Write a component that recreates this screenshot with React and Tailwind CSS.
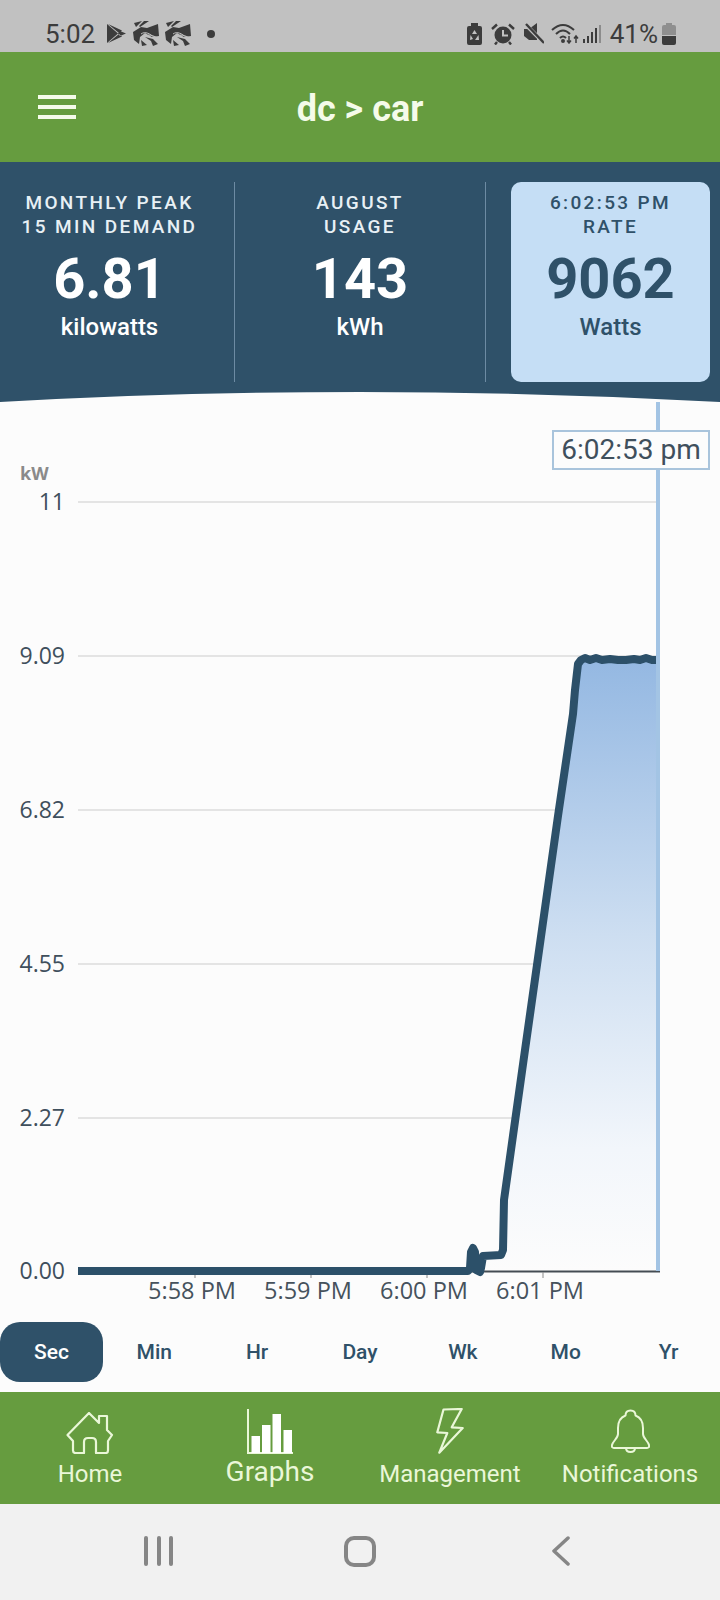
// App.jsx
import React from 'react';

const linePoints = [
  [78, 1271], [468, 1271], [470, 1268], [471, 1252], [473, 1248], [475, 1252], [476, 1270], [480, 1272], [481, 1268],
  [483, 1256], [501, 1255], [503, 1250], [504, 1200], [525, 1050], [558, 816], [573, 714], [575, 690],
  [578, 664], [581, 660], [585, 658], [590, 660], [596, 658], [602, 660], [610, 659], [618, 660], [626, 660], [634, 659],
  [640, 660], [646, 658], [652, 660], [656, 660],
];
const linePath = linePoints.map(p => p.join(',')).join(' ');
const areaPath = `M481,1271 L${linePoints.slice(9).map(p => p.join(',')).join(' L')} L658,660 L658,1271 Z`;

const yLabels = [
  { label: '11', y: 502 },
  { label: '9.09', y: 656 },
  { label: '6.82', y: 810 },
  { label: '4.55', y: 964 },
  { label: '2.27', y: 1118 },
  { label: '0.00', y: 1271 },
];

const xLabels = [
  { label: '5:58 PM', x: 192, tick: 195 },
  { label: '5:59 PM', x: 308, tick: 311 },
  { label: '6:00 PM', x: 424, tick: 427 },
  { label: '6:01 PM', x: 540, tick: 543 },
];

const tabs = ['Sec', 'Min', 'Hr', 'Day', 'Wk', 'Mo', 'Yr'];

const HomeIcon = () => (
  <svg width="48" height="42" viewBox="0 0 48 42" fill="none" stroke="#eaf7d8" strokeWidth="2.2" strokeLinejoin="round" strokeLinecap="round">
    <path d="M23 1 L1.5 23 L7 29 L7 38.5 Q7 41 9.5 41 L18 41 L18 30 Q18 26 22 26 L26 26 Q30 26 30 30 L30 41 L40 41 Q42 41 42 38.5 L42 29 L46 23 L41 18 L41 4 L33 4 L33 11 Z" />
  </svg>
);

const GraphsIcon = () => (
  <svg width="48" height="46" viewBox="0 0 48 46" fill="#ffffff">
    <rect x="1" y="1" width="2" height="45" fill="#eaf7d8" />
    <rect x="1" y="44" width="46" height="2" fill="#eaf7d8" />
    <rect x="5.5" y="28" width="8.5" height="17" />
    <rect x="16" y="17" width="8.5" height="28" />
    <rect x="26.5" y="6" width="8.5" height="39" />
    <rect x="37.5" y="22" width="8.5" height="23" />
  </svg>
);

const BoltIcon = () => (
  <svg width="28" height="46" viewBox="0 0 28 46" fill="none" stroke="#eaf7d8" strokeWidth="2.2" strokeLinejoin="round">
    <path d="M25.7 1 L7.5 1.5 L1.3 24.3 L11.3 25 L3.3 44.7 L26.7 20 L15.7 19.3 Z" />
  </svg>
);

const BellIcon = () => (
  <svg width="39" height="44" viewBox="0 0 39 44" fill="none" stroke="#eaf7d8" strokeWidth="2" strokeLinejoin="round">
    <path d="M14.5 6.5 C14.5 3 16.5 1.5 19.5 1.5 C22.5 1.5 24.5 3 24.5 6.5 C30 8.5 32 13 32 19 L32 25 C32 29 37 32 38 36 C38.5 38 37.5 39 36 39 L3 39 C1.5 39 .5 38 1 36 C2 32 7 29 7 25 L7 19 C7 13 9 8.5 14.5 6.5 Z" />
    <path d="M15 39 C15 42 17 43 19.5 43 C22 43 24 42 24 39" />
  </svg>
);

// the two scrambled notification icons
const SwirlIcon = () => (
  <svg width="26" height="27" viewBox="0 0 26 27">
    <path d="M0 12 L8 7 L14 8 L25 4 L26 16 L19 17 L12 13 L7 17 L6 24 L1 20 Z" fill="#3c3c3c" />
    <path d="M1 3 L9 1 L3 7 Z M11 1 L16 1 L7 7 L6 6 Z" fill="#3c3c3c" />
    <path d="M12 17 L20 19 L25 24 L20 26 L18 21 Z M8 20 L14 25 L9 26 Z" fill="#3c3c3c" />
    <path d="M8 14 C12 11 17 13 24 20 M15 15 C18 15 21 16 25 18" stroke="#c1c1c1" strokeWidth="1" fill="none" />
  </svg>
);

const StatusBar = () => (
  <div className="h-[52px] bg-[#c1c1c1] flex items-center pt-[15px] pl-[45px] pr-[44px] text-[#3c3c3c]">
    <span className="text-[26px] font-normal leading-none w-[62px]">5:02</span>
    <svg width="19" height="19" viewBox="0 0 19 19" className="mr-[7px]">
      <path d="M0 0 L11 9.5 L0 19 Z" fill="#3c3c3c" />
      <path d="M1 0 L15 6.5 L12 9 Z M1 19 L15 12.5 L12 10 Z M13 7 L19 9.5 L13 12 L11 9.5 Z" fill="#3c3c3c" />
    </svg>
    <SwirlIcon />
    <div className="w-[6px]" />
    <SwirlIcon />
    <div className="w-[8px] h-[8px] ml-[16px] rounded-full bg-[#3c3c3c]" />
    <div className="flex-1" />
    <svg width="15" height="22" viewBox="0 0 15 22" className="mr-[9px]">
      <path d="M4 0 H11 V3 H13 Q15 3 15 5 V20 Q15 22 13 22 H2 Q0 22 0 20 V5 Q0 3 2 3 H4 Z" fill="#3c3c3c" />
      <path d="M7.5 7 L10 11 L5 11 Z M3.5 12 L6 16 L3 17 Z M11.5 12 L12 17 L8 17 Z" fill="#c1c1c1" />
    </svg>
    <svg width="24" height="22" viewBox="0 0 24 22" className="mr-[9px]">
      <circle cx="12" cy="12" r="8.5" fill="#3c3c3c" />
      <path d="M12 7 V12.5 H17" stroke="#c1c1c1" strokeWidth="2" fill="none" />
      <path d="M1 6 L6 1.5 M23 6 L18 1.5 M6 19 L4 21.5 M18 19 L20 21.5" stroke="#3c3c3c" strokeWidth="2.4" />
    </svg>
    <svg width="20" height="21" viewBox="0 0 20 21" className="mr-[7px]">
      <path d="M0 6 H5 L13 0 V17 H5 L0 13 Z" fill="#3c3c3c" />
      <path d="M1 1 L20 20" stroke="#c1c1c1" strokeWidth="4" />
      <path d="M2 1 L20 20" stroke="#3c3c3c" strokeWidth="2.4" />
    </svg>
    <svg width="28" height="21" viewBox="0 0 28 21" className="mr-[4px]" fill="none" stroke="#3c3c3c" strokeWidth="2">
      <path d="M1 7 Q12 -3 23 7" />
      <path d="M5 11 Q12 4 19 11" />
      <path d="M9 15 Q12 12 15 15" />
      <circle cx="12" cy="18" r="1" fill="#3c3c3c" />
      <path d="M18 13 V20 M16 17.5 L18 20 L20 17.5 M25 20 V13 M23 15.5 L25 13 L27 15.5" strokeWidth="1.5" />
    </svg>
    <svg width="18" height="20" viewBox="0 0 18 20" className="mr-[9px]">
      <rect x="0" y="15" width="2" height="4" fill="#3c3c3c" />
      <rect x="4" y="12" width="2" height="7" fill="#3c3c3c" />
      <rect x="8" y="8" width="2" height="11" fill="#3c3c3c" />
      <rect x="12" y="4" width="2" height="15" fill="#3c3c3c" />
      <rect x="16" y="1" width="2" height="18" fill="#8c8c8c" />
    </svg>
    <span className="text-[26px] leading-none">41%</span>
    <svg width="14" height="22" viewBox="0 0 14 22" className="ml-[4px]">
      <path d="M4 0 H10 V2 H12 Q14 2 14 4 V12 H0 V4 Q0 2 2 2 H4 Z" fill="#8f8f8f" />
      <path d="M0 13 H14 V20 Q14 22 12 22 H2 Q0 22 0 20 Z" fill="#3c3c3c" />
    </svg>
  </div>
);

const StatText = ({ top, bottom, value, unit, valueClass = 'text-white', labelClass = 'text-[#e8f0f5]' }) => (
  <div className="flex flex-col items-center">
    <div className={`text-[19px] leading-[24px] tracking-[0.125em] font-medium text-center pt-[9px] whitespace-nowrap ${labelClass}`}>
      <div>{top}</div>
      <div>{bottom}</div>
    </div>
    <div className={`text-[56px] leading-[56px] font-bold mt-[12px] ${valueClass}`}>{value}</div>
    <div className={`text-[24px] leading-[28px] font-medium mt-[6px] ${valueClass}`}>{unit}</div>
  </div>
);

const Stats = () => (
  <div>
    <div className="h-[230px] bg-[#2f5169] flex pt-[20px] pb-[10px]">
      <div className="w-[235px] pr-[15px] border-r border-[#6d8ba3]">
        <StatText top="MONTHLY PEAK" bottom="15 MIN DEMAND" value="6.81" unit="kilowatts" />
      </div>
      <div className="w-[251px] border-r border-[#6d8ba3]">
        <StatText top="AUGUST" bottom="USAGE" value="143" unit="kWh" />
      </div>
      <div className="w-[199px] ml-[25px] rounded-[10px] bg-[#c5def5]">
        <StatText top="6:02:53 PM" bottom="RATE" value="9062" unit="Watts" valueClass="text-[#2f5169]" labelClass="text-[#2f5169]" />
      </div>
    </div>
    <svg width="720" height="10" viewBox="0 0 720 10" className="block">
      <path d="M0 0 H720 V10 Q360 -10 0 10 Z" fill="#2f5169" />
    </svg>
  </div>
);

const Chart = () => (
  <div className="relative h-[920px]">
    <svg width="720" height="920" viewBox="0 402 720 920" className="block" fontFamily="'Open Sans', sans-serif">
      <defs>
        <linearGradient id="fillGrad" x1="0" y1="660" x2="0" y2="1271" gradientUnits="userSpaceOnUse">
          <stop offset="0" stopColor="#94b8e2" />
          <stop offset="0.45" stopColor="#cddef1" />
          <stop offset="0.8" stopColor="#f2f6fb" />
          <stop offset="1" stopColor="#fcfcfc" />
        </linearGradient>
      </defs>
      <text x="20" y="480" fontSize="18" fontWeight="700" fill="#8a8a8a">kW</text>
      {yLabels.map(t => (
        <g key={t.label}>
          {t.label !== '0.00' && <line x1="78" x2="658" y1={t.y} y2={t.y} stroke="#dddddd" strokeWidth="1.5" />}
          <text x="65" y={t.y + 8} textAnchor="end" fontSize="23" fill="#3f4f5c">{t.label}</text>
        </g>
      ))}
      <path d={areaPath} fill="url(#fillGrad)" />
      <line x1="78" x2="660" y1="1271.5" y2="1271.5" stroke="#444c53" strokeWidth="2" />
      {xLabels.map(t => (
        <g key={t.label}>
          <line x1={t.tick} x2={t.tick} y1="1272" y2="1278" stroke="#8a8a8a" strokeWidth="1" />
          <text x={t.x} y="1299" textAnchor="middle" fontSize="23.5" fill="#46525c">{t.label}</text>
        </g>
      ))}
      <polyline points={linePath} fill="none" stroke="#2c5069" strokeWidth="8" strokeLinejoin="round" />
      <line x1="658" x2="658" y1="402" y2="1271" stroke="#a3c4e4" strokeWidth="4" />
    </svg>
    <div className="absolute left-[552px] top-[28px] w-[158px] h-[40px] bg-[#fcfcfc] border-2 border-[#a9c4dc] flex items-center justify-center text-[28px] leading-none text-[#3f4f5c]">
      6:02:53 pm
    </div>
  </div>
);

const Tabs = () => (
  <div className="grid grid-cols-7 h-[60px]">
    {tabs.map(t => (
      <div
        key={t}
        className={t === 'Sec'
          ? 'flex items-center justify-center pt-[1px] rounded-[20px] bg-[#2f5169] text-white text-[21px] font-medium'
          : 'flex items-center justify-center pt-[1px] text-[#2f5169] text-[21px] font-medium'}
      >
        {t}
      </div>
    ))}
  </div>
);

const BottomNav = () => (
  <div className="mt-[10px] h-[112px] bg-[#669c3f] grid grid-cols-4 text-[#eaf7d8]">
    <div className="flex flex-col items-center pt-[20px]">
      <HomeIcon />
      <span className="text-[24px] leading-[28px] mt-[6px]">Home</span>
    </div>
    <div className="flex flex-col items-center pt-[16px]">
      <GraphsIcon />
      <span className="text-[28px] leading-[30px] mt-[3px]">Graphs</span>
    </div>
    <div className="flex flex-col items-center pt-[16px]">
      <BoltIcon />
      <span className="text-[24px] leading-[28px] mt-[6px]">Management</span>
    </div>
    <div className="flex flex-col items-center pt-[17px]">
      <BellIcon />
      <span className="text-[24px] leading-[28px] mt-[7px]">Notifications</span>
    </div>
  </div>
);

const SystemNav = () => (
  <div className="h-[96px] bg-[#f1f1f1] grid grid-cols-3 items-center px-[58px] pb-[2px]">
    <div className="flex justify-center">
      <div className="flex gap-[8.5px]">
        <div className="w-[4px] h-[30px] rounded-full bg-[#868686]" />
        <div className="w-[4px] h-[30px] rounded-full bg-[#868686]" />
        <div className="w-[4px] h-[30px] rounded-full bg-[#868686]" />
      </div>
    </div>
    <div className="flex justify-center">
      <div className="w-[32px] h-[31px] rounded-[10px] border-[4px] border-[#868686]" />
    </div>
    <div className="flex justify-center">
      <svg width="18" height="30" viewBox="0 0 18 30" fill="none" stroke="#868686" strokeWidth="3.5" strokeLinecap="round" strokeLinejoin="round">
        <path d="M16 2 L2 15 L16 28" />
      </svg>
    </div>
  </div>
);

export default function App() {
  return (
    <div className="w-[720px] h-[1600px] bg-[#fcfcfc] flex flex-col overflow-hidden font-[Roboto,sans-serif]">
      <StatusBar />
      <div className="h-[110px] bg-[#669c3f] flex items-center relative justify-center pt-[3px]">
        <div className="absolute left-[38px] top-[43px] flex flex-col gap-[6px]">
          <div className="w-[38px] h-[4px] bg-[#f5fbea]" />
          <div className="w-[38px] h-[4px] bg-[#f5fbea]" />
          <div className="w-[38px] h-[4px] bg-[#f5fbea]" />
        </div>
        <span className="text-[36px] font-bold text-[#f5fbea]">dc &gt; car</span>
      </div>
      <Stats />
      <Chart />
      <Tabs />
      <BottomNav />
      <SystemNav />
    </div>
  );
}
